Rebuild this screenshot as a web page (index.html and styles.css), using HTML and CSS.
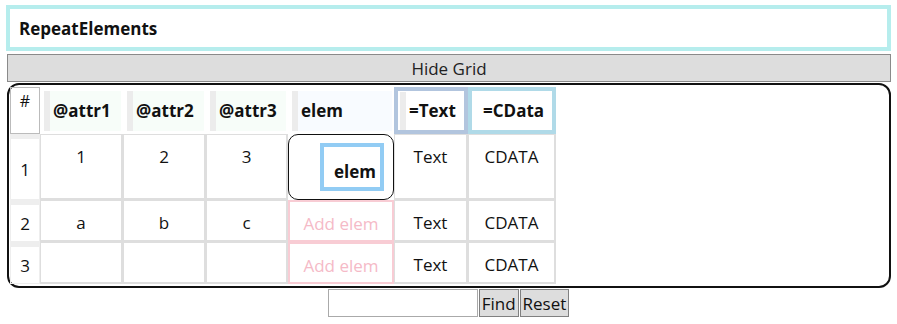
FILE: index.html
```html
<!DOCTYPE html>
<html lang="en">
<head>
    <meta charset="UTF-8">
    <meta name="viewport" content="width=device-width, initial-scale=1.0">
    <title>RepeatElements</title>
    <link rel="stylesheet" href="styles.css">
</head>
<body>
    <div class="title">RepeatElements</div>
    <button class="toggle">Hide Grid</button>

    <div class="grid">
        <table class="repeat">
            <thead>
                <tr class="head-row">
                    <th class="num-head">#</th>
                    <th class="w-attr"><div class="head attr">@attr1</div></th>
                    <th class="w-attr"><div class="head attr">@attr2</div></th>
                    <th class="w-attr3"><div class="head attr">@attr3</div></th>
                    <th class="w-elem"><div class="head elem">elem</div></th>
                    <th class="w-text text-head"><div class="head">=Text</div></th>
                    <th class="w-cdata cdata-head"><div class="head plain">=CData</div></th>
                </tr>
            </thead>
            <tbody>
                <tr class="row-tall">
                    <td class="num">1</td>
                    <td>1</td>
                    <td>2</td>
                    <td>3</td>
                    <td class="elem-cell">
                        <div class="elem-box"><span class="elem-inner">elem</span></div>
                    </td>
                    <td>Text</td>
                    <td>CDATA</td>
                </tr>
                <tr class="row">
                    <td class="num">2</td>
                    <td>a</td>
                    <td>b</td>
                    <td>c</td>
                    <td class="add">Add elem</td>
                    <td>Text</td>
                    <td>CDATA</td>
                </tr>
                <tr class="row">
                    <td class="num">3</td>
                    <td></td>
                    <td></td>
                    <td></td>
                    <td class="add">Add elem</td>
                    <td>Text</td>
                    <td>CDATA</td>
                </tr>
            </tbody>
        </table>
    </div>

    <div class="search">
        <input type="text" class="search-input">
        <button class="btn">Find</button>
        <button class="btn">Reset</button>
    </div>
</body>
</html>
```

FILE: styles.css
```css
body {
    margin: 5px 6px;
    font-family: 'Open Sans', sans-serif;
    font-size: 17px;
    color: #111;
    background: #fff;
}
.title {
    height: 46px;
    box-sizing: border-box;
    border: 4px solid #b6eded;
    padding-left: 9px;
    font-weight: bold;
    display: flex;
    align-items: center;
}
.toggle {
    display: block;
    width: calc(100% - 1px);
    margin: 3px 0 0 1px;
    height: 28px;
    background: #dddddd;
    border: 1px solid #8a8a8a;
    font-family: 'Open Sans', sans-serif;
    font-size: 17px;
    color: #222;
    padding: 0;
}
.grid {
    margin: 1px 0 0 1px;
    border: 2px solid #111;
    border-radius: 12px;
    padding: 2px 1px 2px 1px;
    height: 205px;
    box-sizing: border-box;
}
.repeat {
    border-collapse: separate;
    border-spacing: 0;
    table-layout: fixed;
    width: 546px;
}
.repeat th,
.repeat td {
    box-sizing: border-box;
    padding: 0;
    text-align: center;
    font-weight: normal;
}
.repeat td {
    border-style: solid;
    border-color: #dedede;
    border-width: 1px 2px 2px 1px;
    vertical-align: top;
    padding-top: 10px;
}
.head-row { height: 47px; }
.row-tall { height: 66px; }
.row { height: 42px; }
.num-head {
    width: 30px;
    border: 1px solid #bbb;
    vertical-align: top;
    font-size: 16px;
    line-height: 26px;
}
.w-attr { width: 83px; }
.w-attr3 { width: 82px; }
.w-elem { width: 106px; }
.w-text { width: 74px; }
.w-cdata { width: 88px; }
.head {
    height: 40px;
    margin: 3px 2px 3px 4px;
    border-left: 6px solid #ececec;
    padding-left: 3px;
    display: flex;
    align-items: center;
    font-weight: bold;
    text-align: left;
}
.head.attr { background: #f7fdf9; }
.head.elem { background: #f8fbff; }
.head.plain { border-left-color: transparent; }
.text-head,
.cdata-head {
    border: 4px solid #b2c5de;
}
.cdata-head { border-color: #b0dae8; }
.text-head .head,
.cdata-head .head {
    height: 38px;
    margin: 0 0 0 2px;
}
.repeat td.num {
    vertical-align: middle;
    padding: 0;
    border-color: #eeeeee;
    border-width: 5px 1px 1px 1px;
}
.repeat td.elem-cell {
    border: none;
    padding: 0;
    vertical-align: top;
}
.elem-box {
    height: 66px;
    box-sizing: border-box;
    border: 1.5px solid #111;
    border-radius: 10px;
    display: flex;
    justify-content: flex-end;
    align-items: center;
    padding-right: 9px;
}
.elem-inner {
    border: 4px solid #92ccf4;
    width: 64px;
    height: 48px;
    box-sizing: border-box;
    font-weight: bold;
    display: flex;
    align-items: center;
    justify-content: center;
    padding: 8px 0 0 6px;
}
.repeat td.add {
    border: 2px solid #f8ccd4;
    color: #f5bac7;
}
.search {
    display: flex;
    justify-content: center;
    margin-top: 1px;
}
.search-input {
    width: 150px;
    height: 28px;
    box-sizing: border-box;
    border: 1px solid #aaa;
    margin: 0;
    padding: 0;
}
.btn {
    height: 28px;
    margin: 0 0 0 1px;
    padding: 0 2px;
    background: #dddddd;
    border: 1px solid #808080;
    font-family: 'Open Sans', sans-serif;
    font-size: 17px;
    color: #111;
}
```
